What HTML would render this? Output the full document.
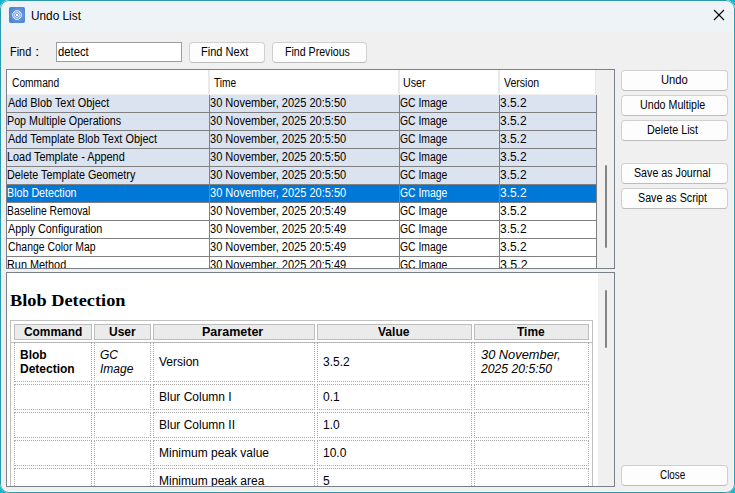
<!DOCTYPE html><html><head><meta charset="utf-8"><style>
html,body{margin:0;padding:0;width:735px;height:493px;overflow:hidden;background:#12b8d0}
.win{position:absolute;left:0;top:0;width:735px;height:493px;border-radius:9px;overflow:hidden;background:#f0f0f0;box-sizing:border-box}
.r,.t{position:absolute}
.t{white-space:nowrap}
.btn{background:#fdfdfd;border:1px solid #d0d0d0;border-bottom-color:#bcbcbc;border-radius:4px;box-sizing:border-box}
.frame{position:absolute;left:0;top:0;width:735px;height:493px;border-radius:9px;box-sizing:border-box;border:1px solid #2a9bac;pointer-events:none}
.frame2{position:absolute;left:1px;top:1px;width:733px;height:491px;border-radius:8px;box-sizing:border-box;border:1px solid #fdf6f6;pointer-events:none}
</style></head><body><div class="win">
<div class="r" style="left:0px;top:0px;width:735px;height:31px;background:#eef3f7"></div>
<div class="r" style="left:0px;top:31px;width:735px;height:1px;background:#eff1f4"></div>
<div class="r" style="left:9px;top:7px;width:16px;height:16px;border-radius:2px;background:radial-gradient(circle at 55% 50%,#7aaaf0 0%,#5b8fdc 55%,#3f78c8 100%)"></div>
<svg class="r" style="left:9px;top:7px" width="16" height="16" viewBox="0 0 16 16"><circle cx="8" cy="8" r="4.3" fill="none" stroke="#fff" stroke-width="1" opacity=".9"/><circle cx="8" cy="8" r="2.6" fill="none" stroke="#fff" stroke-width=".8" opacity=".75"/><path d="M5 5L11 11M11 5L5 11" stroke="#fff" stroke-width=".6" opacity=".5"/><rect x="7" y="7" width="2" height="2" fill="#fff"/></svg>
<div class="t" id="t0" style="left:31.07px;top:9.7px;font:normal normal 12px/12px 'Liberation Sans', sans-serif;color:#000;transform:scaleX(0.9848);transform-origin:0 0;">Undo List</div>
<svg class="r" style="left:713px;top:9px" width="12" height="12" viewBox="0 0 12 12"><path d="M1 1L11 11M11 1L1 11" stroke="#000" stroke-width="1.1" fill="none"/></svg>
<div class="t" id="t1" style="left:9.69px;top:46px;font:normal normal 12px/12px 'Liberation Sans', sans-serif;color:#000;transform:scaleX(0.9094);transform-origin:0 0;">Find</div>
<div class="t" id="t2" style="left:35.00px;top:46px;font:normal normal 12px/12px 'Liberation Sans', sans-serif;color:#000;transform:scaleX(1.3333);transform-origin:0 0;">:</div>
<div class="r" style="left:56px;top:42px;width:126px;height:20px;background:#fff;border:1px solid #9a9ca4;box-sizing:border-box"></div>
<div class="t" id="t3" style="left:58.40px;top:46px;font:normal normal 12px/12px 'Liberation Sans', sans-serif;color:#000;transform:scaleX(0.9394);transform-origin:0 0;">detect</div>
<div class="r btn" style="left:189px;top:42px;width:76px;height:21px"></div>
<div class="t" id="t4" style="left:201.16px;top:46px;font:normal normal 12px/12px 'Liberation Sans', sans-serif;color:#000;transform:scaleX(0.9204);transform-origin:0 0;">Find Next</div>
<div class="r btn" style="left:272px;top:42px;width:95px;height:21px"></div>
<div class="t" id="t5" style="left:285.48px;top:46px;font:normal normal 12px/12px 'Liberation Sans', sans-serif;color:#000;transform:scaleX(0.8837);transform-origin:0 0;">Find Previous</div>
<div class="r" style="left:6px;top:69px;width:609px;height:200px;border:1px solid #7a8089;box-sizing:border-box;background:#f0f0f0"></div>
<div class="r" style="left:7px;top:70px;width:589px;height:24px;background:#fff"></div>
<div class="r" style="left:7px;top:94px;width:589px;height:1px;background:#f0f0f0"></div>
<div class="r" style="left:208px;top:70px;width:2px;height:24px;background:#e9e9e9"></div>
<div class="r" style="left:398px;top:70px;width:2px;height:24px;background:#e9e9e9"></div>
<div class="r" style="left:498px;top:70px;width:2px;height:24px;background:#e9e9e9"></div>
<div class="r" style="left:595px;top:70px;width:1px;height:24px;background:#e9e9e9"></div>
<div class="t" id="t6" style="left:12.10px;top:77px;font:normal normal 12px/12px 'Liberation Sans', sans-serif;color:#000;transform:scaleX(0.8528);transform-origin:0 0;">Command</div>
<div class="t" id="t7" style="left:213.70px;top:77px;font:normal normal 12px/12px 'Liberation Sans', sans-serif;color:#000;transform:scaleX(0.8486);transform-origin:0 0;">Time</div>
<div class="t" id="t8" style="left:403.45px;top:77px;font:normal normal 12px/12px 'Liberation Sans', sans-serif;color:#000;transform:scaleX(0.8889);transform-origin:0 0;">User</div>
<div class="t" id="t9" style="left:504.49px;top:77px;font:normal normal 12px/12px 'Liberation Sans', sans-serif;color:#000;transform:scaleX(0.8778);transform-origin:0 0;">Version</div>
<div class="r c" style="left:7px;top:95px;width:590px;height:173px;overflow:hidden">
<div class="r" style="left:0px;top:0px;width:589px;height:17px;background:#dae3ef"></div>
<div class="r" style="left:0px;top:17px;width:590px;height:1px;background:#808080"></div>
<div class="t" id="t10" style="left:1.10px;top:2px;font:normal normal 12px/12px 'Liberation Sans', sans-serif;color:#000;transform:scaleX(0.9054);transform-origin:0 0;">Add Blob Text Object</div>
<div class="t" id="t11" style="left:203.29px;top:2px;font:normal normal 12px/12px 'Liberation Sans', sans-serif;color:#000;transform:scaleX(0.9197);transform-origin:0 0;">30 November, 2025 20:5:50</div>
<div class="t" id="t12" style="left:393.49px;top:2px;font:normal normal 12px/12px 'Liberation Sans', sans-serif;color:#000;transform:scaleX(0.8639);transform-origin:0 0;">GC Image</div>
<div class="t" id="t13" style="left:492.95px;top:2px;font:normal normal 12px/12px 'Liberation Sans', sans-serif;color:#000;transform:scaleX(0.9958);transform-origin:0 0;">3.5.2</div>
<div class="r" style="left:0px;top:18px;width:589px;height:17px;background:#dae3ef"></div>
<div class="r" style="left:0px;top:35px;width:590px;height:1px;background:#808080"></div>
<div class="t" id="t14" style="left:0.09px;top:20px;font:normal normal 12px/12px 'Liberation Sans', sans-serif;color:#000;transform:scaleX(0.8915);transform-origin:0 0;">Pop Multiple Operations</div>
<div class="t" id="t15" style="left:203.29px;top:20px;font:normal normal 12px/12px 'Liberation Sans', sans-serif;color:#000;transform:scaleX(0.9197);transform-origin:0 0;">30 November, 2025 20:5:50</div>
<div class="t" id="t16" style="left:393.49px;top:20px;font:normal normal 12px/12px 'Liberation Sans', sans-serif;color:#000;transform:scaleX(0.8639);transform-origin:0 0;">GC Image</div>
<div class="t" id="t17" style="left:492.95px;top:20px;font:normal normal 12px/12px 'Liberation Sans', sans-serif;color:#000;transform:scaleX(0.9958);transform-origin:0 0;">3.5.2</div>
<div class="r" style="left:0px;top:36px;width:589px;height:17px;background:#dae3ef"></div>
<div class="r" style="left:0px;top:53px;width:590px;height:1px;background:#808080"></div>
<div class="t" id="t18" style="left:1.10px;top:38px;font:normal normal 12px/12px 'Liberation Sans', sans-serif;color:#000;transform:scaleX(0.9104);transform-origin:0 0;">Add Template Blob Text Object</div>
<div class="t" id="t19" style="left:203.29px;top:38px;font:normal normal 12px/12px 'Liberation Sans', sans-serif;color:#000;transform:scaleX(0.9197);transform-origin:0 0;">30 November, 2025 20:5:50</div>
<div class="t" id="t20" style="left:393.49px;top:38px;font:normal normal 12px/12px 'Liberation Sans', sans-serif;color:#000;transform:scaleX(0.8639);transform-origin:0 0;">GC Image</div>
<div class="t" id="t21" style="left:492.95px;top:38px;font:normal normal 12px/12px 'Liberation Sans', sans-serif;color:#000;transform:scaleX(0.9958);transform-origin:0 0;">3.5.2</div>
<div class="r" style="left:0px;top:54px;width:589px;height:17px;background:#dae3ef"></div>
<div class="r" style="left:0px;top:71px;width:590px;height:1px;background:#808080"></div>
<div class="t" id="t22" style="left:0.08px;top:56px;font:normal normal 12px/12px 'Liberation Sans', sans-serif;color:#000;transform:scaleX(0.9063);transform-origin:0 0;">Load Template - Append</div>
<div class="t" id="t23" style="left:203.29px;top:56px;font:normal normal 12px/12px 'Liberation Sans', sans-serif;color:#000;transform:scaleX(0.9197);transform-origin:0 0;">30 November, 2025 20:5:50</div>
<div class="t" id="t24" style="left:393.49px;top:56px;font:normal normal 12px/12px 'Liberation Sans', sans-serif;color:#000;transform:scaleX(0.8639);transform-origin:0 0;">GC Image</div>
<div class="t" id="t25" style="left:492.95px;top:56px;font:normal normal 12px/12px 'Liberation Sans', sans-serif;color:#000;transform:scaleX(0.9958);transform-origin:0 0;">3.5.2</div>
<div class="r" style="left:0px;top:72px;width:589px;height:17px;background:#dae3ef"></div>
<div class="r" style="left:0px;top:89px;width:590px;height:1px;background:#808080"></div>
<div class="t" id="t26" style="left:0.10px;top:74px;font:normal normal 12px/12px 'Liberation Sans', sans-serif;color:#000;transform:scaleX(0.9007);transform-origin:0 0;">Delete Template Geometry</div>
<div class="t" id="t27" style="left:203.29px;top:74px;font:normal normal 12px/12px 'Liberation Sans', sans-serif;color:#000;transform:scaleX(0.9197);transform-origin:0 0;">30 November, 2025 20:5:50</div>
<div class="t" id="t28" style="left:393.49px;top:74px;font:normal normal 12px/12px 'Liberation Sans', sans-serif;color:#000;transform:scaleX(0.8639);transform-origin:0 0;">GC Image</div>
<div class="t" id="t29" style="left:492.95px;top:74px;font:normal normal 12px/12px 'Liberation Sans', sans-serif;color:#000;transform:scaleX(0.9958);transform-origin:0 0;">3.5.2</div>
<div class="r" style="left:0px;top:90px;width:589px;height:17px;background:#0078d7"></div>
<div class="r" style="left:0px;top:107px;width:590px;height:1px;background:#808080"></div>
<div class="t" id="t30" style="left:0.08px;top:92px;font:normal normal 12px/12px 'Liberation Sans', sans-serif;color:#fff;transform:scaleX(0.8914);transform-origin:0 0;">Blob Detection</div>
<div class="t" id="t31" style="left:203.29px;top:92px;font:normal normal 12px/12px 'Liberation Sans', sans-serif;color:#fff;transform:scaleX(0.9197);transform-origin:0 0;">30 November, 2025 20:5:50</div>
<div class="t" id="t32" style="left:393.49px;top:92px;font:normal normal 12px/12px 'Liberation Sans', sans-serif;color:#fff;transform:scaleX(0.8639);transform-origin:0 0;">GC Image</div>
<div class="t" id="t33" style="left:492.95px;top:92px;font:normal normal 12px/12px 'Liberation Sans', sans-serif;color:#fff;transform:scaleX(0.9958);transform-origin:0 0;">3.5.2</div>
<div class="r" style="left:0px;top:108px;width:589px;height:17px;background:#fff"></div>
<div class="r" style="left:0px;top:125px;width:590px;height:1px;background:#808080"></div>
<div class="t" id="t34" style="left:0.08px;top:110px;font:normal normal 12px/12px 'Liberation Sans', sans-serif;color:#000;transform:scaleX(0.8621);transform-origin:0 0;">Baseline Removal</div>
<div class="t" id="t35" style="left:203.29px;top:110px;font:normal normal 12px/12px 'Liberation Sans', sans-serif;color:#000;transform:scaleX(0.9197);transform-origin:0 0;">30 November, 2025 20:5:49</div>
<div class="t" id="t36" style="left:393.49px;top:110px;font:normal normal 12px/12px 'Liberation Sans', sans-serif;color:#000;transform:scaleX(0.8639);transform-origin:0 0;">GC Image</div>
<div class="t" id="t37" style="left:492.95px;top:110px;font:normal normal 12px/12px 'Liberation Sans', sans-serif;color:#000;transform:scaleX(0.9958);transform-origin:0 0;">3.5.2</div>
<div class="r" style="left:0px;top:126px;width:589px;height:17px;background:#fff"></div>
<div class="r" style="left:0px;top:143px;width:590px;height:1px;background:#808080"></div>
<div class="t" id="t38" style="left:1.10px;top:128px;font:normal normal 12px/12px 'Liberation Sans', sans-serif;color:#000;transform:scaleX(0.9010);transform-origin:0 0;">Apply Configuration</div>
<div class="t" id="t39" style="left:203.29px;top:128px;font:normal normal 12px/12px 'Liberation Sans', sans-serif;color:#000;transform:scaleX(0.9197);transform-origin:0 0;">30 November, 2025 20:5:49</div>
<div class="t" id="t40" style="left:393.49px;top:128px;font:normal normal 12px/12px 'Liberation Sans', sans-serif;color:#000;transform:scaleX(0.8639);transform-origin:0 0;">GC Image</div>
<div class="t" id="t41" style="left:492.95px;top:128px;font:normal normal 12px/12px 'Liberation Sans', sans-serif;color:#000;transform:scaleX(0.9958);transform-origin:0 0;">3.5.2</div>
<div class="r" style="left:0px;top:144px;width:589px;height:17px;background:#fff"></div>
<div class="r" style="left:0px;top:161px;width:590px;height:1px;background:#808080"></div>
<div class="t" id="t42" style="left:1.10px;top:146px;font:normal normal 12px/12px 'Liberation Sans', sans-serif;color:#000;transform:scaleX(0.8693);transform-origin:0 0;">Change Color Map</div>
<div class="t" id="t43" style="left:203.29px;top:146px;font:normal normal 12px/12px 'Liberation Sans', sans-serif;color:#000;transform:scaleX(0.9197);transform-origin:0 0;">30 November, 2025 20:5:49</div>
<div class="t" id="t44" style="left:393.49px;top:146px;font:normal normal 12px/12px 'Liberation Sans', sans-serif;color:#000;transform:scaleX(0.8639);transform-origin:0 0;">GC Image</div>
<div class="t" id="t45" style="left:492.95px;top:146px;font:normal normal 12px/12px 'Liberation Sans', sans-serif;color:#000;transform:scaleX(0.9958);transform-origin:0 0;">3.5.2</div>
<div class="r" style="left:0px;top:162px;width:589px;height:17px;background:#fff"></div>
<div class="r" style="left:0px;top:179px;width:590px;height:1px;background:#808080"></div>
<div class="t" id="t46" style="left:0.07px;top:164px;font:normal normal 12px/12px 'Liberation Sans', sans-serif;color:#000;transform:scaleX(0.9052);transform-origin:0 0;">Run Method</div>
<div class="t" id="t47" style="left:203.29px;top:164px;font:normal normal 12px/12px 'Liberation Sans', sans-serif;color:#000;transform:scaleX(0.9197);transform-origin:0 0;">30 November, 2025 20:5:49</div>
<div class="t" id="t48" style="left:393.49px;top:164px;font:normal normal 12px/12px 'Liberation Sans', sans-serif;color:#000;transform:scaleX(0.8639);transform-origin:0 0;">GC Image</div>
<div class="t" id="t49" style="left:492.91px;top:164px;font:normal normal 12px/12px 'Liberation Sans', sans-serif;color:#000;transform:scaleX(1.0356);transform-origin:0 0;">3.5.2</div>
<div class="r" style="left:202px;top:0px;width:1px;height:173px;background:#808080"></div>
<div class="r" style="left:392px;top:0px;width:1px;height:173px;background:#808080"></div>
<div class="r" style="left:492px;top:0px;width:1px;height:173px;background:#808080"></div>
<div class="r" style="left:589px;top:0px;width:1px;height:173px;background:#808080"></div>
</div>
<div class="r" style="left:605px;top:165px;width:2px;height:83px;background:#858585;border-radius:1px"></div>
<div class="r btn" style="left:621px;top:70px;width:107px;height:21px"></div>
<div class="t" id="t50" style="left:660.54px;top:74px;font:normal normal 12px/12px 'Liberation Sans', sans-serif;color:#000;transform:scaleX(0.9354);transform-origin:0 0;">Undo</div>
<div class="r btn" style="left:621px;top:95px;width:107px;height:21px"></div>
<div class="t" id="t51" style="left:640.17px;top:99px;font:normal normal 12px/12px 'Liberation Sans', sans-serif;color:#000;transform:scaleX(0.8900);transform-origin:0 0;">Undo Multiple</div>
<div class="r btn" style="left:621px;top:120px;width:107px;height:21px"></div>
<div class="t" id="t52" style="left:647.47px;top:124px;font:normal normal 12px/12px 'Liberation Sans', sans-serif;color:#000;transform:scaleX(0.8988);transform-origin:0 0;">Delete List</div>
<div class="r btn" style="left:621px;top:163px;width:107px;height:21px"></div>
<div class="t" id="t53" style="left:634.48px;top:167px;font:normal normal 12px/12px 'Liberation Sans', sans-serif;color:#000;transform:scaleX(0.8898);transform-origin:0 0;">Save as Journal</div>
<div class="r btn" style="left:621px;top:188px;width:107px;height:21px"></div>
<div class="t" id="t54" style="left:638.47px;top:192px;font:normal normal 12px/12px 'Liberation Sans', sans-serif;color:#000;transform:scaleX(0.8926);transform-origin:0 0;">Save as Script</div>
<div class="r btn" style="left:621px;top:465px;width:107px;height:21px"></div>
<div class="t" id="t55" style="left:660.49px;top:469px;font:normal normal 12px/12px 'Liberation Sans', sans-serif;color:#000;transform:scaleX(0.8229);transform-origin:0 0;">Close</div>
<div class="r" style="left:6px;top:272px;width:609px;height:215px;border:1px solid #7a8089;box-sizing:border-box;background:#fff"></div>
<div class="r" style="left:598px;top:273px;width:16px;height:213px;background:#f0f0f0"></div>
<div class="r" style="left:605px;top:290px;width:2px;height:58px;background:#858585;border-radius:1px"></div>
<div class="r c" style="left:7px;top:273px;width:591px;height:213px;overflow:hidden">
<div class="t" id="t56" style="left:2.80px;top:19px;font:normal bold 17.5px/17.5px 'Liberation Serif', serif;color:#000;transform:scaleX(1.0470);transform-origin:0 0;">Blob Detection</div>
<div class="r" style="left:3px;top:47px;width:583px;height:201px;border:1px solid #c0c0c0;box-sizing:border-box"></div>
<div class="r" style="left:7px;top:51px;width:78px;height:16px;background:#ebebeb;border:1px solid #bdbdbd;box-sizing:border-box"></div>
<div class="t" id="t57" style="left:17.00px;top:52.80000000000001px;font:normal bold 12px/12px 'Liberation Sans', sans-serif;color:#000;transform:scaleX(0.9917);transform-origin:0 0;">Command</div>
<div class="r" style="left:87px;top:51px;width:57px;height:16px;background:#ebebeb;border:1px solid #bdbdbd;box-sizing:border-box"></div>
<div class="t" id="t58" style="left:102.00px;top:52.80000000000001px;font:normal bold 12px/12px 'Liberation Sans', sans-serif;color:#000;">User</div>
<div class="r" style="left:146px;top:51px;width:162px;height:16px;background:#ebebeb;border:1px solid #bdbdbd;box-sizing:border-box"></div>
<div class="t" id="t59" style="left:195.19px;top:52.80000000000001px;font:normal bold 12px/12px 'Liberation Sans', sans-serif;color:#000;transform:scaleX(1.0429);transform-origin:0 0;">Parameter</div>
<div class="r" style="left:310px;top:51px;width:155px;height:16px;background:#ebebeb;border:1px solid #bdbdbd;box-sizing:border-box"></div>
<div class="t" id="t60" style="left:370.91px;top:52.80000000000001px;font:normal bold 12px/12px 'Liberation Sans', sans-serif;color:#000;transform:scaleX(1.0035);transform-origin:0 0;">Value</div>
<div class="r" style="left:467px;top:51px;width:115px;height:16px;background:#ebebeb;border:1px solid #bdbdbd;box-sizing:border-box"></div>
<div class="t" id="t61" style="left:510.21px;top:52.80000000000001px;font:normal bold 12px/12px 'Liberation Sans', sans-serif;color:#000;transform:scaleX(0.9932);transform-origin:0 0;">Time</div>
<div class="r" style="left:3px;top:69px;width:583px;height:1px;background:#c0c0c0"></div>
<div class="r" style="left:7px;top:69px;width:78px;height:40px;border:1px dotted #aaaaaa;box-sizing:border-box"></div>
<div class="r" style="left:87px;top:69px;width:57px;height:40px;border:1px dotted #aaaaaa;box-sizing:border-box"></div>
<div class="r" style="left:146px;top:69px;width:162px;height:40px;border:1px dotted #aaaaaa;box-sizing:border-box"></div>
<div class="r" style="left:310px;top:69px;width:155px;height:40px;border:1px dotted #aaaaaa;box-sizing:border-box"></div>
<div class="r" style="left:467px;top:69px;width:115px;height:40px;border:1px dotted #aaaaaa;box-sizing:border-box"></div>
<div class="r" style="left:7px;top:111px;width:78px;height:26px;border:1px dotted #aaaaaa;box-sizing:border-box"></div>
<div class="r" style="left:87px;top:111px;width:57px;height:26px;border:1px dotted #aaaaaa;box-sizing:border-box"></div>
<div class="r" style="left:146px;top:111px;width:162px;height:26px;border:1px dotted #aaaaaa;box-sizing:border-box"></div>
<div class="r" style="left:310px;top:111px;width:155px;height:26px;border:1px dotted #aaaaaa;box-sizing:border-box"></div>
<div class="r" style="left:467px;top:111px;width:115px;height:26px;border:1px dotted #aaaaaa;box-sizing:border-box"></div>
<div class="r" style="left:7px;top:139px;width:78px;height:26px;border:1px dotted #aaaaaa;box-sizing:border-box"></div>
<div class="r" style="left:87px;top:139px;width:57px;height:26px;border:1px dotted #aaaaaa;box-sizing:border-box"></div>
<div class="r" style="left:146px;top:139px;width:162px;height:26px;border:1px dotted #aaaaaa;box-sizing:border-box"></div>
<div class="r" style="left:310px;top:139px;width:155px;height:26px;border:1px dotted #aaaaaa;box-sizing:border-box"></div>
<div class="r" style="left:467px;top:139px;width:115px;height:26px;border:1px dotted #aaaaaa;box-sizing:border-box"></div>
<div class="r" style="left:7px;top:167px;width:78px;height:26px;border:1px dotted #aaaaaa;box-sizing:border-box"></div>
<div class="r" style="left:87px;top:167px;width:57px;height:26px;border:1px dotted #aaaaaa;box-sizing:border-box"></div>
<div class="r" style="left:146px;top:167px;width:162px;height:26px;border:1px dotted #aaaaaa;box-sizing:border-box"></div>
<div class="r" style="left:310px;top:167px;width:155px;height:26px;border:1px dotted #aaaaaa;box-sizing:border-box"></div>
<div class="r" style="left:467px;top:167px;width:115px;height:26px;border:1px dotted #aaaaaa;box-sizing:border-box"></div>
<div class="r" style="left:7px;top:195px;width:78px;height:26px;border:1px dotted #aaaaaa;box-sizing:border-box"></div>
<div class="r" style="left:87px;top:195px;width:57px;height:26px;border:1px dotted #aaaaaa;box-sizing:border-box"></div>
<div class="r" style="left:146px;top:195px;width:162px;height:26px;border:1px dotted #aaaaaa;box-sizing:border-box"></div>
<div class="r" style="left:310px;top:195px;width:155px;height:26px;border:1px dotted #aaaaaa;box-sizing:border-box"></div>
<div class="r" style="left:467px;top:195px;width:115px;height:26px;border:1px dotted #aaaaaa;box-sizing:border-box"></div>
<div class="t" id="t62" style="left:13.00px;top:76px;font:normal bold 12px/12px 'Liberation Sans', sans-serif;color:#000;">Blob</div>
<div class="t" id="t63" style="left:13.00px;top:90px;font:normal bold 12px/12px 'Liberation Sans', sans-serif;color:#000;">Detection</div>
<div class="t" id="t64" style="left:93.00px;top:76px;font:italic normal 12px/12px 'Liberation Sans', sans-serif;color:#000;">GC</div>
<div class="t" id="t65" style="left:93.00px;top:90px;font:italic normal 12px/12px 'Liberation Sans', sans-serif;color:#000;">Image</div>
<div class="t" id="t66" style="left:152.00px;top:83px;font:normal normal 12px/12px 'Liberation Sans', sans-serif;color:#000;">Version</div>
<div class="t" id="t67" style="left:316.00px;top:83px;font:normal normal 12px/12px 'Liberation Sans', sans-serif;color:#000;">3.5.2</div>
<div class="t" id="t68" style="left:473.79px;top:76px;font:italic normal 12px/12px 'Liberation Sans', sans-serif;color:#000;transform:scaleX(1.0698);transform-origin:0 0;">30 November,</div>
<div class="t" id="t69" style="left:473.80px;top:90px;font:italic normal 12px/12px 'Liberation Sans', sans-serif;color:#000;transform:scaleX(1.0143);transform-origin:0 0;">2025 20:5:50</div>
<div class="t" id="t70" style="left:152.00px;top:118px;font:normal normal 12px/12px 'Liberation Sans', sans-serif;color:#000;">Blur Column I</div>
<div class="t" id="t71" style="left:316.00px;top:118px;font:normal normal 12px/12px 'Liberation Sans', sans-serif;color:#000;">0.1</div>
<div class="t" id="t72" style="left:152.00px;top:146px;font:normal normal 12px/12px 'Liberation Sans', sans-serif;color:#000;">Blur Column II</div>
<div class="t" id="t73" style="left:316.00px;top:146px;font:normal normal 12px/12px 'Liberation Sans', sans-serif;color:#000;">1.0</div>
<div class="t" id="t74" style="left:152.00px;top:174px;font:normal normal 12px/12px 'Liberation Sans', sans-serif;color:#000;">Minimum peak value</div>
<div class="t" id="t75" style="left:316.00px;top:174px;font:normal normal 12px/12px 'Liberation Sans', sans-serif;color:#000;">10.0</div>
<div class="t" id="t76" style="left:152.00px;top:202px;font:normal normal 12px/12px 'Liberation Sans', sans-serif;color:#000;">Minimum peak area</div>
<div class="t" id="t77" style="left:316.00px;top:202px;font:normal normal 12px/12px 'Liberation Sans', sans-serif;color:#000;">5</div>
</div>
<div class="frame2"></div><div class="frame"></div>
</div></body></html>
